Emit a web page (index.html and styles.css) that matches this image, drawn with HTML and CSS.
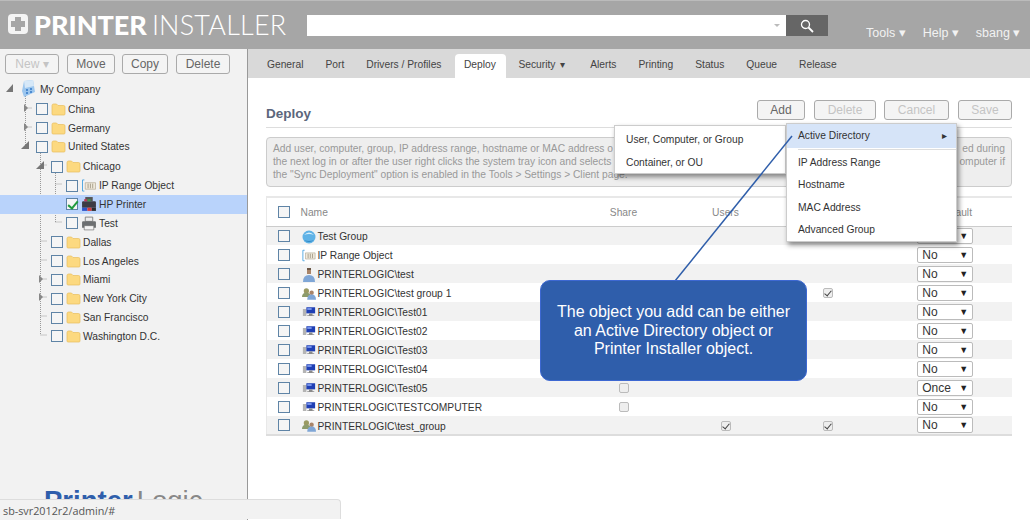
FILE: index.html
```html
<!DOCTYPE html>
<html lang="en">
    <head>
        <meta charset="UTF-8">
        <title>Printer Installer - Deploy</title>
        <link rel="stylesheet" href="styles.css">
    </head>
    <body>
        <svg class="sprite" width="0" height="0">
            <symbol id="folder" viewBox="0 0 15 13">
                <path d="M1 2.500q0-1.500 1.500-1.500h3l1.500 1.500h5.500q1.500 0 1.500 1.500v7q0 1-1 1h-11q-1 0-1-1z" fill="#fcd980" stroke="#e8bd5c" stroke-width=".7"/>
            </symbol>
            <symbol id="printer" viewBox="0 0 15 14">
                <path d="M4 1h7v4H4z" fill="#eee" stroke="#777" stroke-width=".8"/>
                <path d="M1 6q0-1 1-1h11q1 0 1 1v5H1z" fill="#6d7072"/>
                <path d="M3 9h9v4H3z" fill="#f4f4f4" stroke="#666" stroke-width=".6"/>
            </symbol>
            <symbol id="printer-color" viewBox="0 0 15 14">
                <path d="M4 0h7v4H4z" fill="#555"/>
                <path d="M1 5q0-1 1-1h11q1 0 1 1v5H1z" fill="#3c3c44"/>
                <path d="M3 2h3v2H3z" fill="#c03a5a"/>
                <path d="M6 2h3v2H6z" fill="#3c9a4c"/>
                <path d="M1 10h5v3H1z" fill="#2f55c8"/>
                <path d="M6 10h4v3H6z" fill="#d83a3a"/>
                <path d="M10 10h4v3h-4z" fill="#2c2c2c"/>
            </symbol>
            <symbol id="iprange" viewBox="0 0 16 14">
                <path d="M3 1H1v12h2" fill="none" stroke="#4aa3e0" stroke-width="1"/>
                <path d="M4 4h11v7H4z" fill="#efe9dc" stroke="#b0a690" stroke-width=".7"/>
                <path d="M7 5v5M9.500 5v5M12 5v5" stroke="#9a917c" stroke-width=".9"/>
            </symbol>
            <symbol id="globe" viewBox="0 0 14 14">
                <circle cx="7" cy="7" r="6.500" fill="#5fb2e6"/>
                <path d="M2 5q5-5 10 0q-5-2-10 0z" fill="#d8effb"/>
                <path d="M2 10q5 4 10 0q-5 2-10 0z" fill="#2f86c4"/>
            </symbol>
            <symbol id="user" viewBox="0 0 14 16">
                <path d="M5 1h4v6H5z" fill="#a98468"/>
                <path d="M5 1h4v2H5z" fill="#6c5746"/>
                <path d="M1 15q0-7 6-7t6 7z" fill="#7fa6d6"/>
            </symbol>
            <symbol id="group" viewBox="0 0 16 15">
                <circle cx="5" cy="4" r="3" fill="#9a9a62"/>
                <path d="M0 11q0-5 5-5t5 5z" fill="#8d9b6c"/>
                <circle cx="11" cy="6" r="2.500" fill="#a98468"/>
                <path d="M6 14q0-6 5-6t5 6z" fill="#7fa6d6"/>
            </symbol>
            <symbol id="computer" viewBox="0 0 16 14">
                <path d="M1 3h4v8H1z" fill="#b4b4b4"/>
                <path d="M5 1h10v7H5z" fill="#1f3fb4"/>
                <path d="M6 2h5v2H6z" fill="#7f9cf0"/>
                <path d="M8 8h4v2H8zM6 10h8v1H6z" fill="#8a8a8a"/>
            </symbol>
            <symbol id="company" viewBox="0 0 15 18">
                <path d="M3 1l9-1 2 12-11 5-2-6z" fill="#9cc6ee"/>
                <path d="M3 1l9-1 1 6-9 2z" fill="#d6e8f8"/>
                <path d="M5 9h2v2H5zM9 8h2v2H9zM5 12h2v2H5zM9 11h2v2H9z" fill="#4d8bd0"/>
            </symbol>
            <symbol id="search" viewBox="0 0 14 14">
                <circle cx="5.500" cy="5.500" r="4" fill="none" stroke="#fff" stroke-width="1.300"/>
                <path d="M8.500 8.500L13 13" stroke="#fff" stroke-width="1.800"/>
            </symbol>
        </svg>

        <header class="topbar">
            <div class="logo">
                <span class="logo-plus"></span>
                <span class="logo-bold">PRINTER</span>
                <span class="logo-thin">INSTALLER</span>
            </div>
            <div class="search">
                <div class="search-input"><span class="search-caret"></span></div>
                <div class="search-btn"><svg width="14" height="14"><use href="#search"/></svg></div>
            </div>
            <nav class="usernav">
                <span>Tools ▾</span>
                <span>Help ▾</span>
                <span>sbang ▾</span>
            </nav>
        </header>

        <div class="main">
            <aside class="sidebar">
                <div class="side-actions">
                    <button class="btn btn-new off">New ▾</button>
                    <button class="btn btn-move">Move</button>
                    <button class="btn btn-copy">Copy</button>
                    <button class="btn btn-del">Delete</button>
                </div>
                <div class="tree">
                    <svg class="tree-lines" width="100" height="280">
                        <path d="M25.500 15V66M40.500 72V256M55.500 92V143M25.500 29H32M25.500 48H32M40.500 86H47M40.500 162H47M40.500 181H47M40.500 200H47M40.500 218H47M40.500 237H47M40.500 256H47M55.500 105H62M55.500 124H62M55.500 143H62" fill="none" stroke="#999" stroke-dasharray="1 1"/>
                        <path d="M6 13L13 13L13 5z" fill="#777"/>
                        <path d="M24 25l4 4-4 4zM24 44l4 4-4 4zM39 196l4 4-4 4zM39 214l4 4-4 4z" fill="#888"/>
                        <path d="M21 70L29 70L29 62z" fill="#777"/>
                        <path d="M36 90L44 90L44 82z" fill="#777"/>
                    </svg>
                    <div class="node lv0"><svg class="ico" width="15" height="18"><use href="#company"/></svg><span>My Company</span></div>
                    <div class="node lv1 gap"><i class="cb"></i><svg class="ico" width="15" height="13"><use href="#folder"/></svg><span>China</span></div>
                    <div class="node lv1"><i class="cb"></i><svg class="ico" width="15" height="13"><use href="#folder"/></svg><span>Germany</span></div>
                    <div class="node lv1"><i class="cb"></i><svg class="ico" width="15" height="13"><use href="#folder"/></svg><span>United States</span></div>
                    <div class="node lv2 gap"><i class="cb"></i><svg class="ico" width="15" height="13"><use href="#folder"/></svg><span>Chicago</span></div>
                    <div class="node lv3"><i class="cb"></i><svg class="ico" width="16" height="13"><use href="#iprange"/></svg><span>IP Range Object</span></div>
                    <div class="node lv3 selected"><i class="cb on"></i><svg class="ico" width="16" height="15"><use href="#printer-color"/></svg><span>HP Printer</span></div>
                    <div class="node lv3"><i class="cb"></i><svg class="ico" width="16" height="15"><use href="#printer"/></svg><span>Test</span></div>
                    <div class="node lv2"><i class="cb"></i><svg class="ico" width="15" height="13"><use href="#folder"/></svg><span>Dallas</span></div>
                    <div class="node lv2"><i class="cb"></i><svg class="ico" width="15" height="13"><use href="#folder"/></svg><span>Los Angeles</span></div>
                    <div class="node lv2"><i class="cb"></i><svg class="ico" width="15" height="13"><use href="#folder"/></svg><span>Miami</span></div>
                    <div class="node lv2"><i class="cb"></i><svg class="ico" width="15" height="13"><use href="#folder"/></svg><span>New York City</span></div>
                    <div class="node lv2"><i class="cb"></i><svg class="ico" width="15" height="13"><use href="#folder"/></svg><span>San Francisco</span></div>
                    <div class="node lv2"><i class="cb"></i><svg class="ico" width="15" height="13"><use href="#folder"/></svg><span>Washington D.C.</span></div>
                </div>
                <div class="brand"><b>Printer</b>Logic</div>
            </aside>

            <section class="content">
                <div class="tabs">
                    <span class="tab">General</span>
                    <span class="tab">Port</span>
                    <span class="tab">Drivers / Profiles</span>
                    <span class="tab active">Deploy</span>
                    <span class="tab tab-drop">Security <small>▾</small></span>
                    <span class="tab">Alerts</span>
                    <span class="tab">Printing</span>
                    <span class="tab">Status</span>
                    <span class="tab">Queue</span>
                    <span class="tab">Release</span>
                </div>
                <div class="panel">
                    <div class="panel-head">
                        <h2>Deploy</h2>
                        <div class="panel-actions">
                            <button class="btn btn-add">Add</button>
                            <button class="btn btn-delete off">Delete</button>
                            <button class="btn btn-cancel off">Cancel</button>
                            <button class="btn btn-save off">Save</button>
                        </div>
                    </div>
                    <div class="info">
                        <p><span>Add user, computer, group, IP address range, hostname or MAC address o</span><span>ed during</span></p>
                        <p><span>the next log in or after the user right clicks the system tray icon and selects</span><span>omputer if</span></p>
                        <p><span>the "Sync Deployment" option is enabled in the Tools &gt; Settings &gt; Client page.</span></p>
                    </div>
                    <table class="objects">
                        <thead>
                            <tr>
                                <th class="c-check"><i class="cb"></i></th>
                                <th class="c-name">Name</th>
                                <th class="c-opt">Share</th>
                                <th class="c-opt">Users</th>
                                <th class="c-opt"></th>
                                <th class="c-default">Default</th>
                            </tr>
                        </thead>
                        <tbody>
                            <tr><td><i class="cb"></i></td><td class="name"><svg class="row-ico" width="14" height="14"><use href="#globe"/></svg>Test Group</td><td></td><td></td><td></td><td><div class="sel">No</div></td></tr>
                            <tr><td><i class="cb"></i></td><td class="name"><svg class="row-ico" width="14" height="13"><use href="#iprange"/></svg>IP Range Object</td><td></td><td></td><td></td><td><div class="sel">No</div></td></tr>
                            <tr><td><i class="cb"></i></td><td class="name"><svg class="row-ico" width="14" height="16"><use href="#user"/></svg>PRINTERLOGIC\test</td><td></td><td></td><td></td><td><div class="sel">No</div></td></tr>
                            <tr><td><i class="cb"></i></td><td class="name"><svg class="row-ico" width="14" height="14"><use href="#group"/></svg>PRINTERLOGIC\test group 1</td><td></td><td></td><td><i class="mini on"></i></td><td><div class="sel">No</div></td></tr>
                            <tr><td><i class="cb"></i></td><td class="name"><svg class="row-ico" width="14" height="13"><use href="#computer"/></svg>PRINTERLOGIC\Test01</td><td></td><td></td><td></td><td><div class="sel">No</div></td></tr>
                            <tr><td><i class="cb"></i></td><td class="name"><svg class="row-ico" width="14" height="13"><use href="#computer"/></svg>PRINTERLOGIC\Test02</td><td></td><td></td><td></td><td><div class="sel">No</div></td></tr>
                            <tr><td><i class="cb"></i></td><td class="name"><svg class="row-ico" width="14" height="13"><use href="#computer"/></svg>PRINTERLOGIC\Test03</td><td></td><td></td><td></td><td><div class="sel">No</div></td></tr>
                            <tr><td><i class="cb"></i></td><td class="name"><svg class="row-ico" width="14" height="13"><use href="#computer"/></svg>PRINTERLOGIC\Test04</td><td></td><td></td><td></td><td><div class="sel">No</div></td></tr>
                            <tr><td><i class="cb"></i></td><td class="name"><svg class="row-ico" width="14" height="13"><use href="#computer"/></svg>PRINTERLOGIC\Test05</td><td><i class="mini"></i></td><td></td><td></td><td><div class="sel">Once</div></td></tr>
                            <tr><td><i class="cb"></i></td><td class="name"><svg class="row-ico" width="14" height="13"><use href="#computer"/></svg>PRINTERLOGIC\TESTCOMPUTER</td><td><i class="mini"></i></td><td></td><td></td><td><div class="sel">No</div></td></tr>
                            <tr><td><i class="cb"></i></td><td class="name"><svg class="row-ico" width="14" height="14"><use href="#group"/></svg>PRINTERLOGIC\test_group</td><td></td><td><i class="mini on"></i></td><td><i class="mini on"></i></td><td><div class="sel">No</div></td></tr>
                        </tbody>
                    </table>
                </div>
            </section>
        </div>

        <div class="menu menu-sub">
            <div class="menu-item">User, Computer, or Group</div>
            <div class="menu-item">Container, or OU</div>
        </div>
        <div class="menu menu-add">
            <div class="menu-item hover">Active Directory<span class="arrow">▸</span></div>
            <div class="menu-sep"></div>
            <div class="menu-item">IP Address Range</div>
            <div class="menu-item">Hostname</div>
            <div class="menu-item">MAC Address</div>
            <div class="menu-item">Advanced Group</div>
        </div>

        <svg class="pointer" width="1031" height="520"><path d="M792 136L675 281" stroke="#2f5eaa" stroke-width="1.500"/></svg>
        <div class="callout">The object you add can be either an Active Directory object or Printer Installer object.</div>
        <div class="statusbar">sb-svr2012r2/admin/#</div>
    </body>
</html>
```

FILE: styles.css
```css
* {
    box-sizing: border-box;
}

html, body {
    margin: 0;
    height: 100%;
    overflow: hidden;
}

body {
    width: 1030px;
    height: 520px;
    display: flex;
    flex-direction: column;
    font-family: "Liberation Sans", Arial, sans-serif;
    font-size: 10.25px;
    color: #333;
    background: white;
}

.sprite {
    position: absolute;
}

/* top bar */
.topbar {
    display: flex;
    height: 49px;
    flex-shrink: 0;
    background: #a6a6a6;
    border-top: 1px solid #bbb;
    color: white;
}
.logo {
    display: flex;
    align-items: center;
    width: 307px;
    padding: 0 0 2px 8px;
    font-family: Lato, "Open Sans", sans-serif;
    font-size: 27px;
}
.logo-plus {
    position: relative;
    width: 20px;
    height: 20px;
    margin-right: 6px;
    border-radius: 4px;
    background: #f4f4f4;
}
.logo-plus::before, .logo-plus::after {
    content: '';
    position: absolute;
    background: #a6a6a6;
}
.logo-plus::before {
    left: 3px; right: 3px; top: 7px; bottom: 7px;
}
.logo-plus::after {
    left: 7px; right: 7px; top: 3px; bottom: 3px;
}
.logo-bold {
    font-weight: 900;
    margin-right: 5px;
}
.logo-thin {
    font-weight: 300;
    letter-spacing: 0.2px;
}

.search {
    display: flex;
    width: 521px;
    height: 21px;
    margin-top: 14px;
}
.search-input {
    flex: 1;
    position: relative;
    background: white;
}
.search-caret {
    position: absolute;
    right: 6px;
    top: 9px;
    border: 3.5px solid transparent;
    border-top-color: #bbb;
    border-bottom: 0;
}
.search-btn {
    width: 42px;
    display: flex;
    justify-content: center;
    align-items: center;
    background: #666;
}

.usernav {
    display: flex;
    gap: 17px;
    margin-left: 38px;
    padding-top: 24px;
    font-size: 12.5px;
    color: #f2f2f2;
}

/* left side */
.main {
    flex: 1;
    display: flex;
    min-height: 0;
}
.sidebar {
    width: 248px;
    flex-shrink: 0;
    display: flex;
    flex-direction: column;
    overflow: hidden;
    background: #f2f2f2;
    border-right: 1px solid #999;
}
.side-actions {
    display: flex;
    height: 31px;
    padding: 5px 0 0 5px;
}

.btn {
    height: 20px;
    padding: 0;
    border: 1px solid #aaa;
    border-radius: 3px;
    background: #f4f4f4;
    font-family: inherit;
    font-size: 12px;
    color: #666;
}
.btn.off {
    color: #c4c4c4;
}
.btn-new { width: 54px; margin-right: 8px; }
.btn-move { width: 48px; margin-right: 7px; }
.btn-copy { width: 46px; margin-right: 8px; }
.btn-del { width: 54px; }
.btn-add { width: 48px; margin-right: 9px; }
.btn-delete { width: 62px; margin-right: 8px; }
.btn-cancel { width: 65px; margin-right: 9px; }
.btn-save { width: 54px; }

.tree {
    position: relative;
    flex: 1;
}
.tree-lines {
    position: absolute;
    top: -1px;
    left: 0;
}
.node {
    position: relative;
    display: flex;
    align-items: center;
    height: 18.85px;
}
.node.gap {
    margin-top: 1px;
}
.node.selected {
    background: #b9d3fb;
}
.node .ico {
    margin: 0 2px 0 3px;
}
.lv0 .ico {
    margin-right: 4px;
}
.lv0 { padding-left: 18px; }
.lv1 { padding-left: 36px; }
.lv2 { padding-left: 51px; }
.lv3 { padding-left: 66px; }

.cb {
    display: inline-block;
    position: relative;
    width: 12px;
    height: 12px;
    border: 1px solid #5f84a6;
    background: #f5f5f5;
}
.cb.on::after {
    content: '';
    position: absolute;
    left: 3px;
    top: 0;
    width: 4px;
    height: 8px;
    border: solid #1f9a3c;
    border-width: 0 2px 2px 0;
    transform: rotate(40deg);
}

.brand {
    height: 34px;
    flex-shrink: 0;
    padding-left: 44px;
    font-size: 27.5px;
    line-height: 30px;
    color: #888;
}
.brand b {
    color: #2f5eab;
    margin-right: 4px;
}

/* right side */
.content {
    flex: 1;
    display: flex;
    flex-direction: column;
    min-width: 0;
}
.tabs {
    display: flex;
    align-items: flex-end;
    height: 29px;
    padding-left: 8px;
    background: #d9d9d9;
}
.tab {
    height: 24px;
    padding: 0 11px;
    line-height: 22px;
    color: #444;
}
.tab small {
    font-size: 10px;
    margin-left: 2px;
}
.tab-drop {
    padding-right: 14px;
}
.tab.active {
    margin: 0 1px 0 3px;
    padding: 0 10.500px 0 8.500px;
    border-radius: 4px 4px 0 0;
    background: white;
}

.panel {
    padding: 0 18px;
}
.panel-head {
    display: flex;
    justify-content: space-between;
    height: 50px;
    padding-top: 22px;
    border-bottom: 1px solid #ddd;
}
.panel-actions {
    display: flex;
}
.panel-head h2 {
    margin: 6px 0 0;
    font-size: 13.500px;
    color: #5b667c;
}
.info {
    height: 50px;
    margin-top: 9px;
    padding: 4px 6px;
    border: 1px solid #ccc;
    border-radius: 4px;
    background: #eee;
    color: #999;
    line-height: 13px;
}
.info p {
    display: flex;
    justify-content: space-between;
    margin: 0;
}

.objects {
    width: 100%;
    margin-top: 9px;
    table-layout: fixed;
    border-collapse: collapse;
    border-top: 2px solid #e8e8e8;
    border-left: 1px solid #e8e8e8;
    border-bottom: 2px solid #ddd;
}
.objects thead tr {
    height: 29px;
    border-bottom: 1px solid #ccc;
}
.objects th {
    padding: 1px 0 0;
    font-weight: normal;
    color: #888;
    text-align: center;
}
.objects th.c-check { width: 34px; }
.objects th.c-name { width: 272px; text-align: left; }
.objects th.c-opt { width: 102px; }
.objects th.c-default {
    padding-right: 40px;
    text-align: right;
}
.objects tbody tr {
    height: 19px;
}
.objects tbody tr:nth-child(odd) {
    background: #f2f2f2;
}
.objects td {
    padding: 0;
    text-align: center;
    vertical-align: middle;
}
.objects td.name {
    padding-top: 2px;
    line-height: 15px;
    text-align: left;
    color: #333;
}
.objects .cb {
    vertical-align: middle;
}
.row-ico {
    margin: -5px 2px -4px 1px;
    vertical-align: middle;
}
.mini {
    display: inline-block;
    position: relative;
    width: 10px;
    height: 10px;
    border: 1px solid #bbb;
    border-radius: 2px;
    background: #eee;
    vertical-align: middle;
}
.mini.on::after {
    content: '';
    position: absolute;
    left: 2px;
    top: 0;
    width: 3px;
    height: 6px;
    border: solid #444;
    border-width: 0 1.5px 1.5px 0;
    transform: rotate(40deg);
}
.sel {
    position: relative;
    width: 56px;
    height: 16px;
    margin: 0 auto;
    padding-left: 4px;
    border: 1px solid #bbb;
    border-radius: 2px;
    background: white;
    font-size: 12px;
    line-height: 14px;
    text-align: left;
    color: #333;
}
.sel::after {
    content: '▼';
    position: absolute;
    right: 4px;
    top: 0;
    font-size: 9px;
    color: #222;
}

/* things lying over the page */
.menu {
    position: absolute;
    background: white;
    border: 1px solid #ccc;
    box-shadow: 2px 3px 5px rgba(0, 0, 0, 0.45);
    color: #333;
}
.menu-sub {
    left: 614px;
    top: 125px;
    width: 172px;
    height: 49px;
    padding-top: 2px;
}
.menu-sub .menu-item {
    height: 23px;
    line-height: 23px;
    padding-left: 11px;
}
.menu-add {
    left: 786px;
    top: 123px;
    width: 171px;
    height: 119px;
}
.menu-add .menu-item {
    position: relative;
    height: 22.300px;
    line-height: 22px;
    padding-left: 11px;
}
.menu-add .menu-item.hover {
    height: 24px;
    line-height: 24px;
    background: #d6e4f8;
}
.menu-sep {
    height: 1px;
    margin: 1px 0 2px 11px;
    background: #ddd;
}
.arrow {
    position: absolute;
    right: 9px;
    font-size: 10px;
}

.pointer {
    position: absolute;
    top: 0;
    left: 0;
}
.callout {
    position: absolute;
    left: 540px;
    top: 280px;
    width: 267px;
    height: 101px;
    padding: 22px 14px 0;
    border: 1.500px solid #3d68d2;
    border-radius: 10px;
    background: #2f5eab;
    font-size: 16px;
    line-height: 18.500px;
    text-align: center;
    color: white;
}
.statusbar {
    position: absolute;
    left: 0;
    bottom: 1px;
    width: 341px;
    height: 20px;
    padding: 3px 0 0 3px;
    border-top: 1px solid #ddd;
    border-right: 1px solid #ddd;
    border-radius: 0 4px 0 0;
    background: #f2f2f2;
    font-family: "Open Sans", sans-serif;
    font-size: 10.800px;
    color: #555;
}
```
